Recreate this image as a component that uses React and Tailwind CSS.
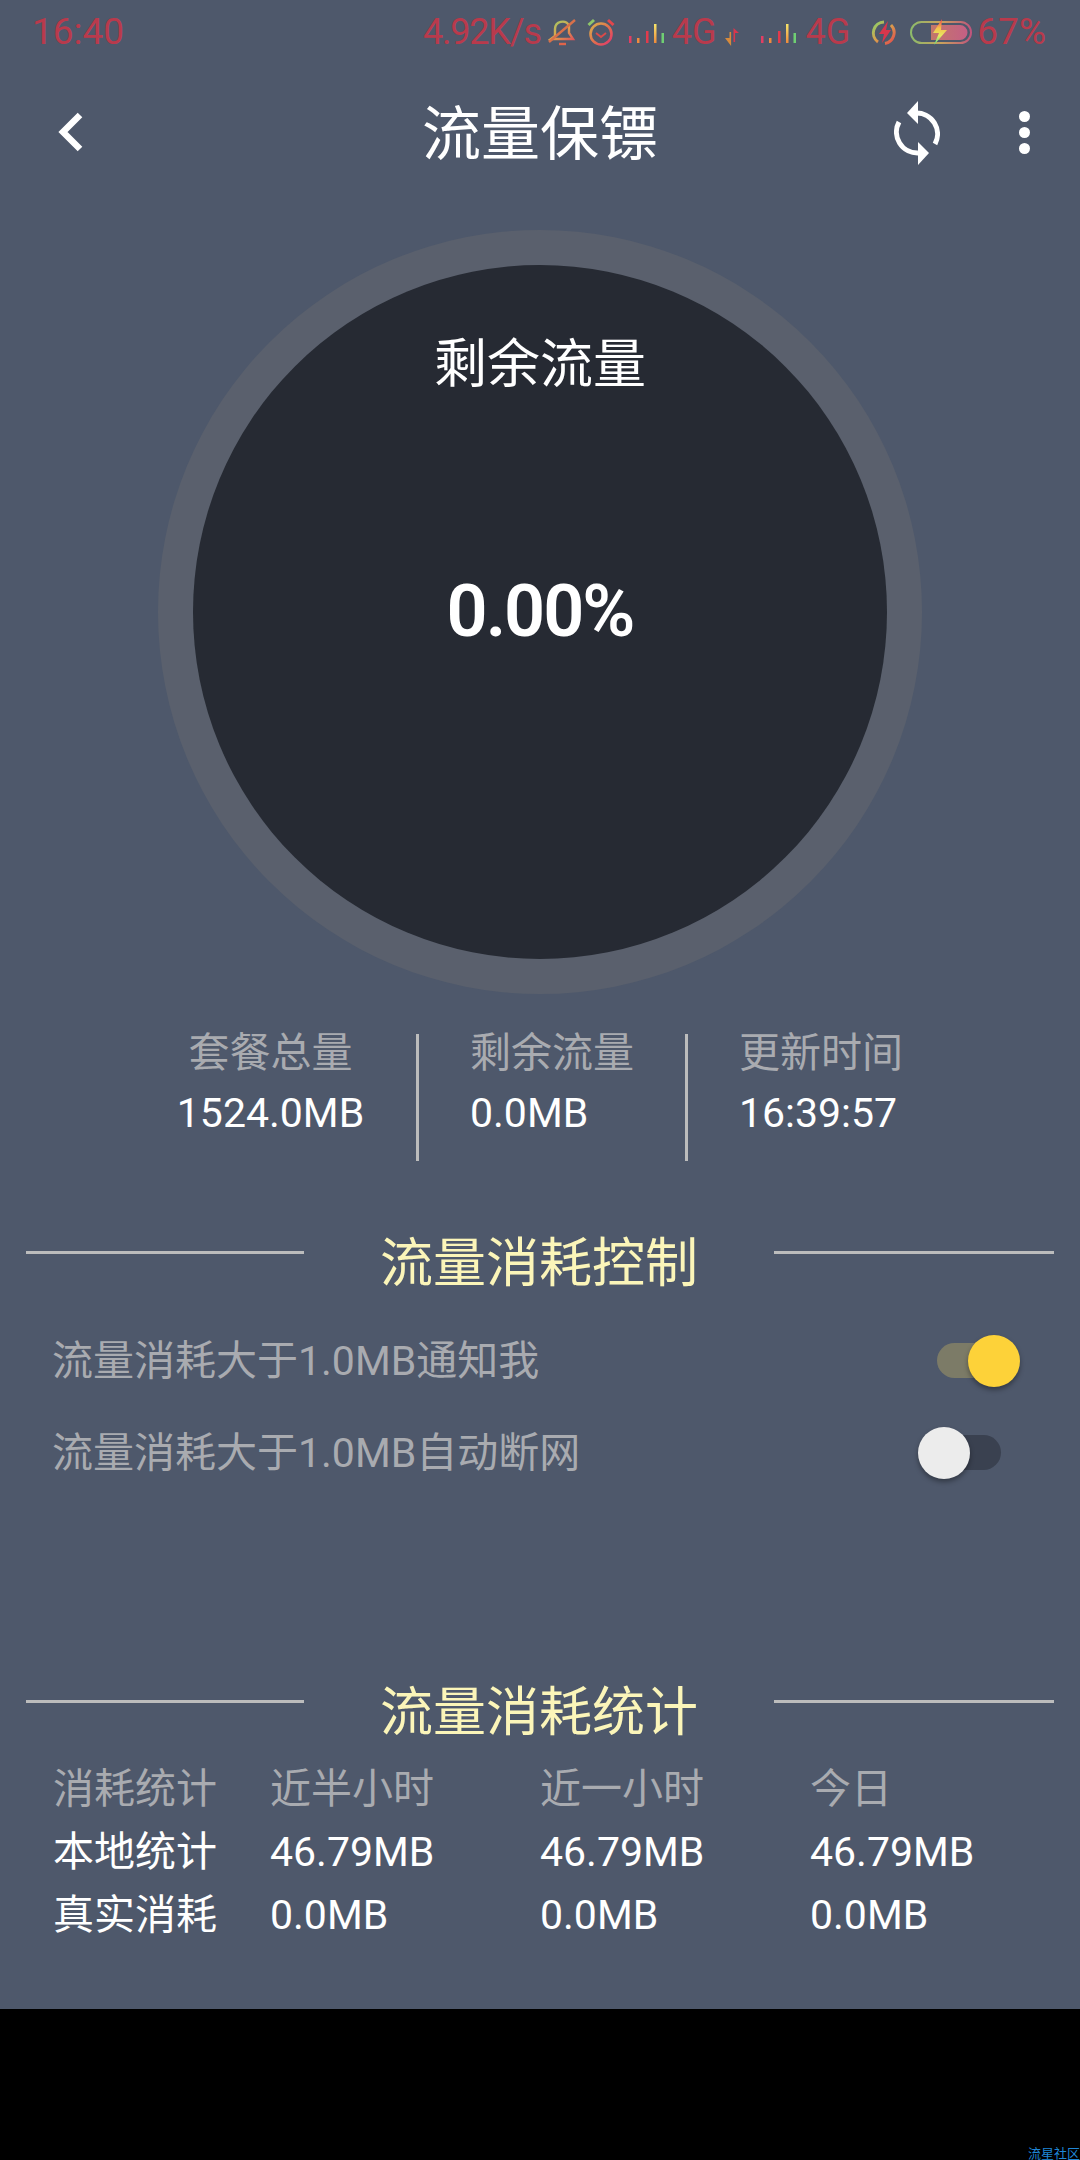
const sans = "font-['Roboto','Noto_Sans_CJK_SC',sans-serif]";

function Bars({ id }) {
  return (
    <svg width="36" height="20" viewBox="0 0 36 20">
      <defs>
        <linearGradient id={id} x1="0" y1="0" x2="0" y2="1">
          <stop offset="0" stopColor="#f5e56b" />
          <stop offset="1" stopColor="#ee8a3a" />
        </linearGradient>
      </defs>
      <rect x="1" y="13" width="2.5" height="7" fill="#e23e63" />
      <rect x="9" y="15" width="2.5" height="5" fill="#f08a3e" />
      <rect x="18" y="8" width="2.5" height="12" fill="#e23a4c" />
      <rect x="26" y="1" width="2.5" height="19" fill={`url(#${id})`} />
      <rect x="33.5" y="10" width="2.5" height="10" fill="#6fcf73" />
    </svg>
  );
}

function BellOff() {
  return (
    <svg width="28" height="28" viewBox="0 0 28 28" fill="none" strokeWidth="2.4" className="ml-[7px]">
      <defs>
        <linearGradient id="bell" gradientUnits="userSpaceOnUse" x1="6" y1="2" x2="22" y2="26">
          <stop offset="0" stopColor="#9ccb66" />
          <stop offset="0.5" stopColor="#e0a04c" />
          <stop offset="1" stopColor="#dc4a5a" />
        </linearGradient>
      </defs>
      <path d="M7 18V11a7.500 7.500 0 0 1 14 -3.500V15l4 6H3l4-3" stroke="url(#bell)" />
      <path d="M11 26h7" stroke="#e0644a" />
      <path d="M1 24 27 2" stroke="#d8704a" />
    </svg>
  );
}

function Alarm() {
  return (
    <svg width="28" height="28" viewBox="0 0 28 28" fill="none" strokeWidth="2.6" className="ml-[11px]">
      <defs>
        <linearGradient id="alarm" gradientUnits="userSpaceOnUse" x1="4" y1="6" x2="24" y2="26">
          <stop offset="0" stopColor="#d8b04c" />
          <stop offset="0.5" stopColor="#e2704c" />
          <stop offset="1" stopColor="#e0386c" />
        </linearGradient>
      </defs>
      <circle cx="14" cy="16" r="10.5" stroke="url(#alarm)" />
      <path d="M9 15l5 4 5-4" stroke="#d94a4a" strokeWidth="2" />
      <path d="M1.500 7 7 2" stroke="#8fc66a" strokeWidth="3" />
      <path d="M21 2l5.500 5" stroke="#e2474c" strokeWidth="3" />
    </svg>
  );
}

function DataArrows() {
  return (
    <svg width="14" height="18" viewBox="0 0 14 18" className="ml-[8px] mt-[10px]">
      <path d="M4.500 4h1.600v14L0 10h4.500z" fill="#d68a3c" />
      <path d="M8.500 0 14 5H10.100v9H8.500z" fill="#d9364c" />
    </svg>
  );
}

function ChargeCircle() {
  return (
    <svg width="26" height="27" viewBox="0 0 26 27" fill="none" strokeWidth="3" className="ml-[21px]">
      <defs>
        <linearGradient id="charge" gradientUnits="userSpaceOnUse" x1="2" y1="3" x2="22" y2="24">
          <stop offset="0" stopColor="#86d46c" />
          <stop offset="0.5" stopColor="#d9a04c" />
          <stop offset="1" stopColor="#e2504c" />
        </linearGradient>
      </defs>
      <path d="M13 3A11 11 0 0 0 7 23" stroke="url(#charge)" />
      <path d="M20 6A11 11 0 0 1 14 24.500" stroke="url(#charge)" />
      <path d="M17 2 8 15h5l-2 9 9-13h-5z" fill="#d9364c" />
    </svg>
  );
}

function Battery() {
  return (
    <svg width="62" height="26" viewBox="0 0 62 26" fill="none" className="ml-[13px]">
      <defs>
        <linearGradient id="batOut" x1="0" y1="0" x2="1" y2="0">
          <stop offset="0" stopColor="#8dbb6a" />
          <stop offset="0.5" stopColor="#c9a25c" />
          <stop offset="1" stopColor="#c0557c" />
        </linearGradient>
        <linearGradient id="batFill" x1="0" y1="0" x2="1" y2="0">
          <stop offset="0" stopColor="#c2786a" />
          <stop offset="1" stopColor="#c45f85" />
        </linearGradient>
        <linearGradient id="batBolt" x1="0" y1="0" x2="0" y2="1">
          <stop offset="0" stopColor="#ee3a4c" />
          <stop offset="0.35" stopColor="#f5c04c" />
          <stop offset="0.65" stopColor="#e5e860" />
          <stop offset="1" stopColor="#4ee08a" />
        </linearGradient>
      </defs>
      <rect x="1" y="3" width="60" height="21" rx="10.500" stroke="url(#batOut)" strokeWidth="2" />
      <path d="M21 6h29a7.500 7.500 0 0 1 0 15H21z" fill="url(#batFill)" />
      <path d="M32 0 23 14h6l-5 12 13-15h-6z" fill="url(#batBolt)" />
    </svg>
  );
}

function Refresh() {
  return (
    <svg width="46" height="64" viewBox="0 0 46 64" fill="none">
      <path d="M22 12A21 21 0 0 1 41 43" stroke="white" strokeWidth="5" />
      <path d="M24 0 13 12l11 11z" fill="white" />
      <path d="M24 52A21 21 0 0 1 5 21" stroke="white" strokeWidth="5" />
      <path d="M24 64 35 52 24 41z" fill="white" />
    </svg>
  );
}

function Stat({ label, value, className }) {
  return (
    <div className={`flex flex-col pt-[1px] ${className}`}>
      <span className="text-[41px] leading-[36px] text-[#a9abb0] whitespace-nowrap">{label}</span>
      <span className="text-[41px] leading-[36px] mt-[24px] text-white whitespace-nowrap">{value}</span>
    </div>
  );
}

function SectionTitle({ children }) {
  return (
    <div className="flex items-center justify-between px-[26px]">
      <div className="w-[278px] h-[3px] bg-[#bcbcbc] mb-[24px]" />
      <span className="text-[53px] leading-[70px] text-[#fbf5b9]">{children}</span>
      <div className="w-[280px] h-[3px] bg-[#bcbcbc] mb-[24px]" />
    </div>
  );
}

function Toggle({ on }) {
  return (
    <div className={`relative w-[64px] h-[35px] rounded-full ${on ? "bg-[#7c7b67]" : "bg-[#3a4150]"}`}>
      <div
        className={`absolute -top-[8px] w-[52px] h-[52px] rounded-full shadow-[0_3px_5px_rgba(0,0,0,0.35)] ${
          on ? "-right-[19px] bg-[#fdd239]" : "-left-[19px] bg-[#ececec]"
        }`}
      />
    </div>
  );
}

function ToggleRow({ label, on }) {
  return (
    <div className="h-[70px] pl-[52px] pr-[79px] flex items-center justify-between text-[41px] text-[#a9abb0]">
      <span className="pt-[4px]">{label}</span>
      <Toggle on={on} />
    </div>
  );
}

export default function App() {
  return (
    <div className={`w-[1080px] h-[2160px] bg-black flex flex-col ${sans}`}>
      <div className="h-[2009px] bg-[#4e586b] flex flex-col">
        <div className="h-[64px] pl-[32px] pr-[34px] flex items-center text-[#b93a4c] text-[36px]">
          <span className="text-[37px]">16:40</span>
          <span className="ml-auto tracking-[-1.2px]">4.92K/s</span>
          <BellOff />
          <Alarm />
          <div className="ml-[13px] mt-[1px]"><Bars id="barsA" /></div>
          <span className="ml-[8px]">4G</span>
          <DataArrows />
          <div className="ml-[21px] mt-[1px]"><Bars id="barsB" /></div>
          <span className="ml-[10px]">4G</span>
          <ChargeCircle />
          <Battery />
          <span className="ml-[5px] text-[37px]">67%</span>
        </div>

        <div className="h-[142px] grid grid-cols-[1fr_auto_1fr] items-center">
          <svg className="ml-[58px] mb-[6px]" width="26" height="40" viewBox="0 0 26 40" fill="none">
            <path d="M22 3 5 20l17 17" stroke="white" strokeWidth="6.500" />
          </svg>
          <span className="text-[59px] text-white">流量保镖</span>
          <div className="flex items-center justify-end pr-[50px] gap-[79px] mb-[4px]">
            <Refresh />
            <div className="flex flex-col gap-[5px] mb-[2px]">
              <div className="w-[11px] h-[11px] rounded-full bg-white" />
              <div className="w-[11px] h-[11px] rounded-full bg-white" />
              <div className="w-[11px] h-[11px] rounded-full bg-white" />
            </div>
          </div>
        </div>

        <div className="flex justify-center mt-[24px]">
          <div className="w-[764px] h-[764px] rounded-full bg-[#5a606d] flex items-center justify-center">
            <div className="w-[694px] h-[694px] rounded-full bg-[#262a33] flex flex-col items-center">
              <span className="text-[53px] leading-[70px] text-white mt-[65px]">剩余流量</span>
              <span className="text-[72px] leading-[84px] font-semibold tracking-[-2px] text-white mt-[170px]">0.00%</span>
            </div>
          </div>
        </div>

        <div className="flex mt-[40px] items-start pl-[171px]">
          <Stat label="套餐总量" value="1524.0MB" className="w-[199px] items-center" />
          <div className="w-[3px] h-[127px] ml-[46px] bg-[#bcbcbc]" />
          <Stat label="剩余流量" value="0.0MB" className="w-[266px] pl-[51px] items-start" />
          <div className="w-[3px] h-[127px] bg-[#bcbcbc]" />
          <Stat label="更新时间" value="16:39:57" className="pl-[51px] items-start" />
        </div>

        <div className="mt-[68px]">
          <SectionTitle>流量消耗控制</SectionTitle>
        </div>

        <div className="mt-[26px] flex flex-col gap-[22px]">
          <ToggleRow label="流量消耗大于1.0MB通知我" on />
          <ToggleRow label="流量消耗大于1.0MB自动断网" />
        </div>

        <div className="mt-[191px]">
          <SectionTitle>流量消耗统计</SectionTitle>
        </div>

        <div className="mt-[10px] pl-[53px] grid grid-cols-[217px_270px_270px_1fr] text-[41px] leading-[63px] text-white">
          <span className="text-[#a9abb0]">消耗统计</span>
          <span className="text-[#a9abb0]">近半小时</span>
          <span className="text-[#a9abb0]">近一小时</span>
          <span className="text-[#a9abb0]">今日</span>
          <span>本地统计</span>
          <span>46.79MB</span>
          <span>46.79MB</span>
          <span>46.79MB</span>
          <span>真实消耗</span>
          <span>0.0MB</span>
          <span>0.0MB</span>
          <span>0.0MB</span>
        </div>
      </div>
      <div className="flex-1 flex justify-end items-end">
        <span className="text-[13px] leading-[13px] text-[#1f86d6]">流星社区</span>
      </div>
    </div>
  );
}
